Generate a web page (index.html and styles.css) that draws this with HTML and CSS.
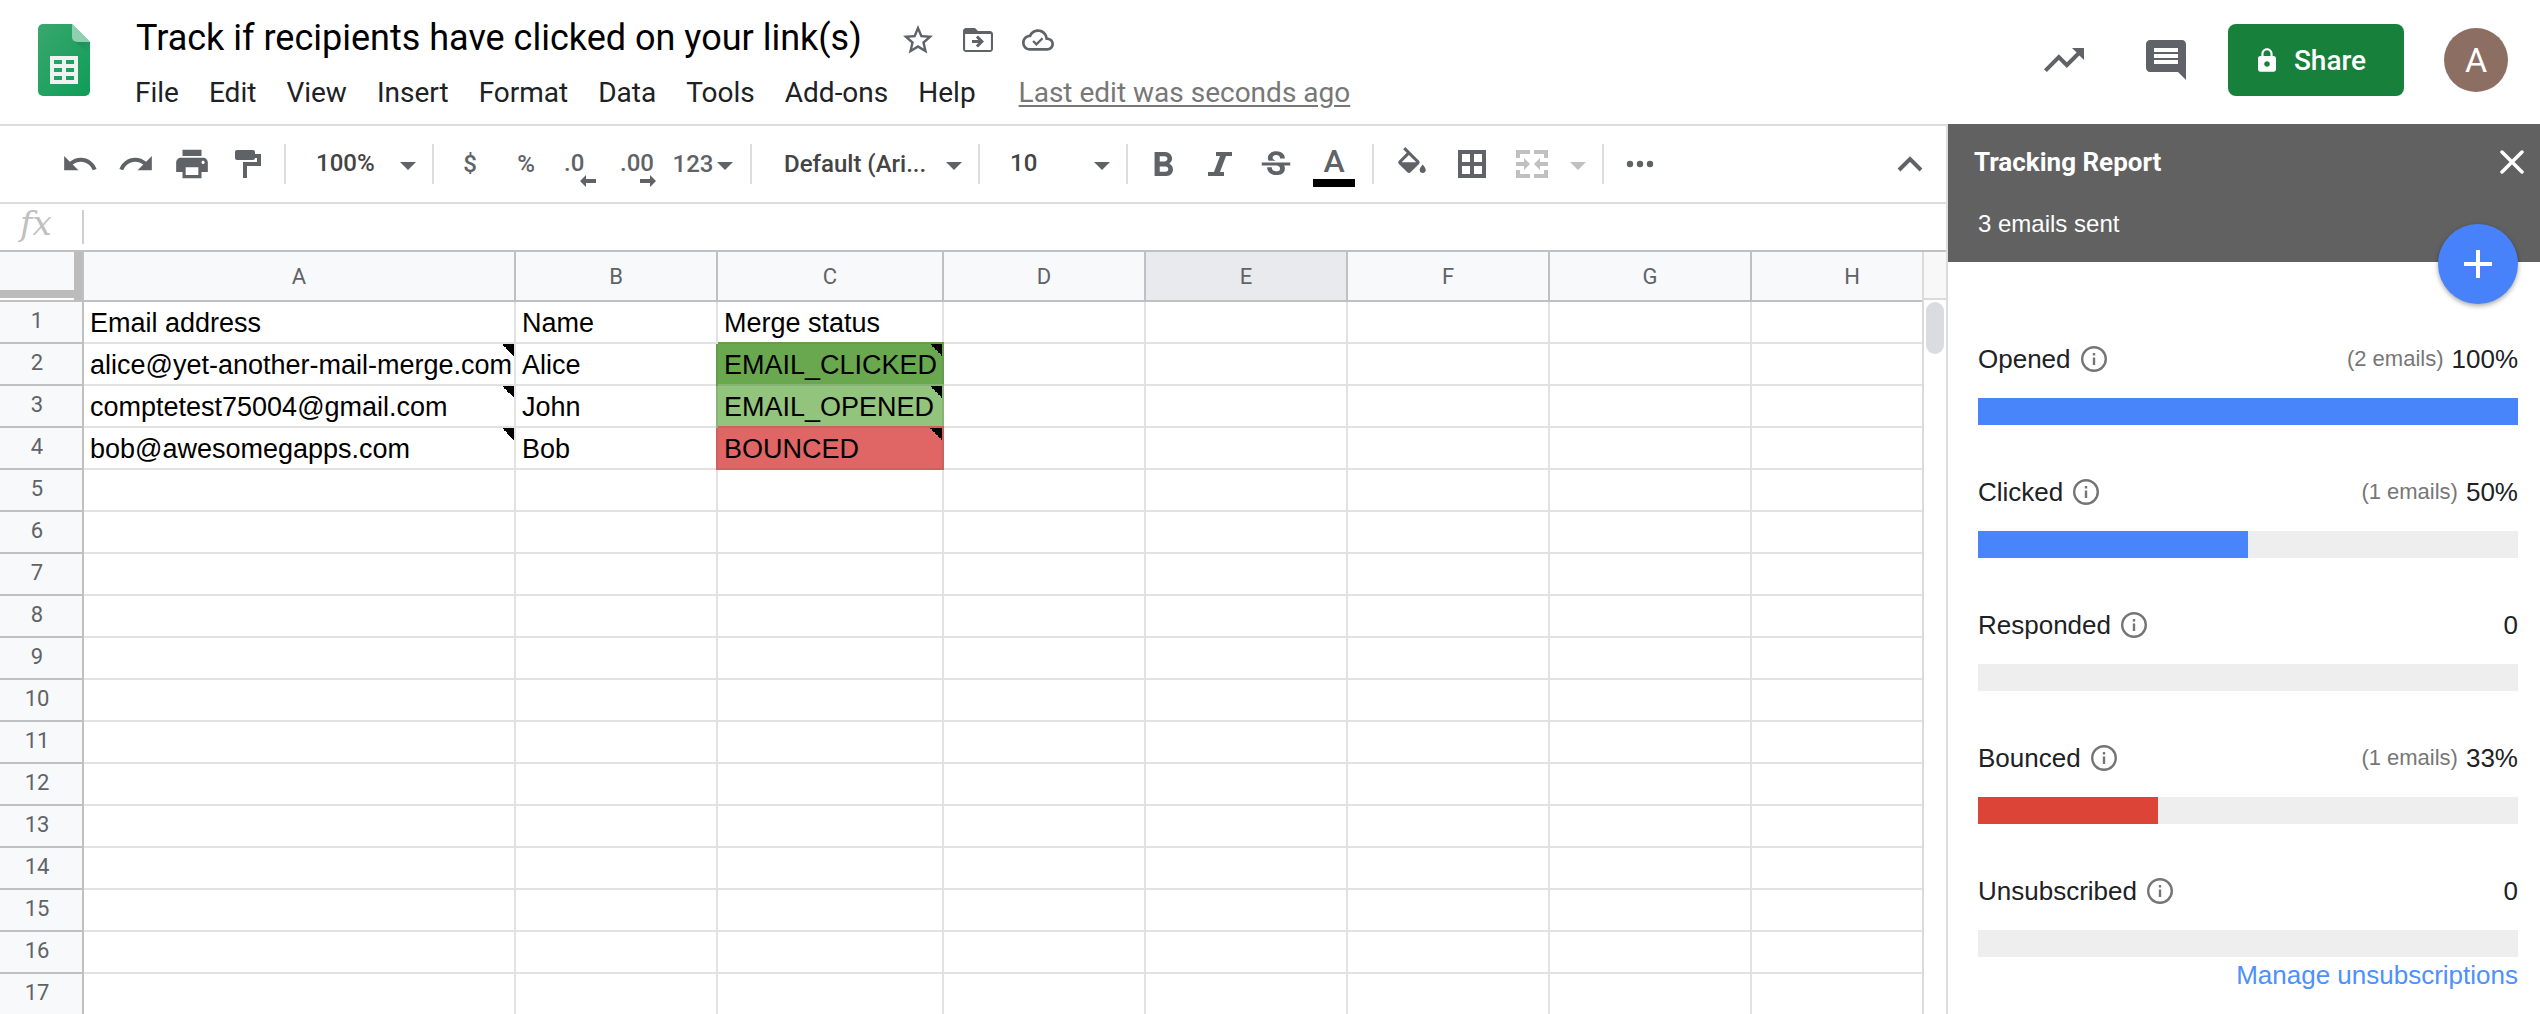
FILE: index.html
```html
<!DOCTYPE html>
<html lang="en">
<head>
<meta charset="utf-8">
<title>Track if recipients have clicked on your link(s)</title>
<link rel="stylesheet" href="styles.css">
</head>
<body>
<header class="topbar">
  <svg class="logo" viewBox="0 0 52 72" aria-hidden="true">
    <defs>
      <linearGradient id="leaf" x1="0" y1="0" x2="1" y2="1"><stop offset="0" stop-color="#3aa76d"/><stop offset="1" stop-color="#0f9d58"/></linearGradient>
      <linearGradient id="fold" x1="0" y1="0" x2="1" y2="1"><stop offset="0" stop-color="#1f8a5b"/><stop offset="1" stop-color="#1ea362"/></linearGradient>
    </defs>
    <path fill="url(#leaf)" d="M5 0h29l18 18v49a5 5 0 0 1-5 5H5a5 5 0 0 1-5-5V5a5 5 0 0 1 5-5z"/>
    <path fill="url(#fold)" d="M36 17l16 13V18z"/>
    <path fill="#8ed1b1" d="M34 0l18 18H39a5 5 0 0 1-5-5z"/>
    <path fill="#f1f1f1" fill-rule="evenodd" d="M12 32h28v28H12zM16 36v4h8v-4zM28 36v4h8v-4zM16 44v4h8v-4zM28 44v4h8v-4zM16 52v4h8v-4zM28 52v4h8v-4z"/>
  </svg>
  <div class="heading">
    <div class="title-row">
      <h1 class="doc-title">Track if recipients have clicked on your link(s)</h1>
      <button class="title-button" aria-label="Star"><svg class="icon-36" viewBox="0 0 24 24"><path d="M22 9.24l-7.19-.62L12 2 9.19 8.63 2 9.24l5.46 4.73L5.82 21 12 17.27 18.18 21l-1.63-7.03L22 9.24zM12 15.4l-3.76 2.27 1-4.28-3.32-2.88 4.38-.38L12 6.1l1.71 4.04 4.38.38-3.32 2.88 1 4.28L12 15.4z"/></svg></button>
      <button class="title-button" aria-label="Move"><svg class="icon-36" viewBox="0 0 24 24"><path d="M20 6h-8l-2-2H4c-1.1 0-2 .9-2 2v12c0 1.1.9 2 2 2h16c1.1 0 2-.9 2-2V8c0-1.1-.9-2-2-2zm.6 12.600H3.400V8h17.200v10.600z"/><path d="M12.160 12H8v2h4.160l-1.590 1.590L11.990 17 16 13.010 11.990 9l-1.410 1.410L12.160 12z"/></svg></button>
      <button class="title-button" aria-label="Document status"><svg class="icon-32" viewBox="0 0 24 24"><path d="M19.350 10.040C18.670 6.590 15.640 4 12 4 9.110 4 6.600 5.640 5.350 8.040 2.340 8.360 0 10.910 0 14c0 3.310 2.690 6 6 6h13c2.760 0 5-2.240 5-5 0-2.640-2.050-4.780-4.650-4.960zM19 18H6c-2.210 0-4-1.790-4-4 0-2.050 1.530-3.760 3.560-3.970l1.070-.110.5-.950C8.080 7.140 9.940 6 12 6c2.620 0 4.880 1.860 5.390 4.430l.3 1.500 1.530.110c1.560.1 2.780 1.410 2.780 2.960 0 1.650-1.350 3-3 3z"/><path fill="none" stroke="currentColor" stroke-width="1.700" d="M8.300 12.800l2.500 2.500 4.600-4.600"/></svg></button>
    </div>
    <nav class="menubar">
      <button class="menu">File</button>
      <button class="menu">Edit</button>
      <button class="menu">View</button>
      <button class="menu">Insert</button>
      <button class="menu">Format</button>
      <button class="menu">Data</button>
      <button class="menu">Tools</button>
      <button class="menu">Add-ons</button>
      <button class="menu">Help</button>
      <a class="last-edit" href="#history">Last edit was seconds ago</a>
    </nav>
  </div>
  <div class="account">
    <button class="plain" aria-label="Activity"><svg class="icon-48" viewBox="0 0 24 24"><path d="M16 6l2.290 2.290-4.880 4.880-4-4L2 16.590 3.410 18l6-6 4 4 6.300-6.290L22 12V6z"/></svg></button>
    <button class="plain" aria-label="Comments"><svg class="icon-48" viewBox="0 0 24 24"><path d="M21.990 4c0-1.100-.890-2-1.990-2H4c-1.100 0-2 .9-2 2v12c0 1.100.9 2 2 2h14l4 4-.010-18zM18 14H6v-2h12v2zm0-3H6V9h12v2zm0-3H6V6h12v2z"/></svg></button>
    <button class="share"><svg class="lock" viewBox="4 1 16 21"><path d="M18 8h-1V6c0-2.760-2.240-5-5-5S7 3.240 7 6v2H6c-1.100 0-2 .9-2 2v10c0 1.100.9 2 2 2h12c1.100 0 2-.9 2-2V10c0-1.100-.9-2-2-2zm-6 9.500c-1.400 0-2.500-1.100-2.500-2.500s1.100-2.500 2.500-2.500 2.500 1.100 2.500 2.500-1.100 2.500-2.500 2.500zm3.100-9.500H8.900V6c0-1.710 1.390-3.100 3.100-3.100 1.710 0 3.100 1.390 3.100 3.100v2z"/></svg>Share</button>
    <button class="avatar" aria-label="Account">A</button>
  </div>
</header>

<main class="workspace">
  <section class="sheet">
    <div class="toolbar">
      <button class="tool" aria-label="Undo"><svg class="icon-38" viewBox="0 0 24 24"><path d="M12.500 8c-2.650 0-5.050.990-6.900 2.600L2 7v9h9l-3.620-3.620c1.390-1.160 3.160-1.880 5.120-1.880 3.540 0 6.550 2.310 7.600 5.500l2.370-.780C21.080 11.030 17.150 8 12.500 8z"/></svg></button>
      <button class="tool" aria-label="Redo"><svg class="icon-38" viewBox="0 0 24 24"><path d="M18.400 10.600C16.550 8.990 14.150 8 11.500 8c-4.650 0-8.580 3.030-9.960 7.220L3.900 16c1.050-3.190 4.050-5.500 7.600-5.500 1.950 0 3.730.720 5.120 1.880L13 16h9V7l-3.600 3.600z"/></svg></button>
      <button class="tool" aria-label="Print"><svg class="icon-38" viewBox="0 0 24 24"><path d="M19 8H5c-1.660 0-3 1.340-3 3v6h4v4h12v-4h4v-6c0-1.660-1.340-3-3-3zm-3 11H8v-5h8v5zm3-7c-.550 0-1-.450-1-1s.450-1 1-1 1 .450 1 1-.450 1-1 1zm-1-9H6v4h12V3z"/></svg></button>
      <button class="tool" aria-label="Paint format"><svg class="icon-paint" viewBox="0 0 26 28"><path d="M2 0h16a2 2 0 0 1 2 2v2h6v12H12v12H8V12h14V8h-2a2 2 0 0 1-2 2H2a2 2 0 0 1-2-2V2a2 2 0 0 1 2-2z"/></svg></button>
      <span class="divider"></span>
      <label class="dropdown"><select aria-label="Zoom"><option>100%</option></select><svg class="caret" viewBox="0 0 16 8"><path d="M0 0h16l-8 8z"/></svg></label>
      <span class="divider"></span>
      <button class="tool">$</button>
      <button class="tool">%</button>
      <button class="tool decimals" aria-label="Decrease decimal places"><span>.0</span><svg class="step" viewBox="0 0 16 12"><path d="M0 6l6-6v4h10v4H6v4z"/></svg></button>
      <button class="tool decimals decimals-more" aria-label="Increase decimal places"><span>.00</span><svg class="step" viewBox="0 0 16 12"><path d="M16 6l-6-6v4H0v4h10v4z"/></svg></button>
      <button class="tool formats">123<svg class="caret" viewBox="0 0 16 8"><path d="M0 0h16l-8 8z"/></svg></button>
      <span class="divider"></span>
      <label class="dropdown dropdown-font"><select aria-label="Font"><option>Default (Ari...</option></select><svg class="caret" viewBox="0 0 16 8"><path d="M0 0h16l-8 8z"/></svg></label>
      <span class="divider"></span>
      <label class="dropdown"><select aria-label="Font size"><option>10</option></select><svg class="caret" viewBox="0 0 16 8"><path d="M0 0h16l-8 8z"/></svg></label>
      <span class="divider"></span>
      <button class="tool" aria-label="Bold"><svg class="icon-bold" viewBox="7 4 11 14"><path d="M15.600 10.790c.970-.670 1.650-1.770 1.650-2.790 0-2.260-1.750-4-4-4H7v14h7.040c2.090 0 3.710-1.700 3.710-3.790 0-1.520-.860-2.820-2.150-3.420zM10 6.500h3c.830 0 1.500.670 1.500 1.500s-.670 1.500-1.500 1.500h-3v-3zm3.500 9H10v-3h3.500c.830 0 1.500.670 1.500 1.500s-.670 1.500-1.500 1.500z"/></svg></button>
      <button class="tool" aria-label="Italic"><svg class="icon-italic" viewBox="0 0 24 24"><path d="M8 0h16v4h-6l-6 16h4v4H0v-4h6l6-16H8z"/></svg></button>
      <button class="tool" aria-label="Strikethrough"><svg class="icon-38" viewBox="0 -1 24 24"><path d="M6.850 7.080C6.850 4.370 9.450 3 12.240 3c1.640 0 3 .490 3.900 1.280.770.650 1.460 1.730 1.460 3.240h-3.010c0-.310-.050-.590-.150-.850-.290-.860-1.200-1.280-2.250-1.280-1.860 0-2.340 1.020-2.340 1.700 0 .480.250.880.740 1.210.380.250.770.480 1.410.700H7.390c-.210-.340-.540-.890-.540-1.920zM21 12v-2H3v2h9.620c1.150.450 1.960.750 1.960 1.970 0 1-.810 1.670-2.280 1.670-1.540 0-2.930-.540-2.930-2.510H6.400c0 .550.080 1.130.240 1.580.810 2.290 3.290 3.300 5.670 3.300 2.270 0 5.300-.890 5.300-4.050 0-.300-.010-1.160-.480-1.940H21V12z"/></svg></button>
      <button class="tool tool-wide text-color">A</button>
      <span class="divider"></span>
      <button class="tool tool-wide" aria-label="Fill color"><svg class="icon-fill" viewBox="3 0 18 17"><path d="M16.560 8.940L7.620 0 6.210 1.410l2.380 2.380-5.150 5.150c-.590.590-.590 1.540 0 2.120l5.500 5.500c.290.290.680.440 1.060.440s.770-.150 1.060-.440l5.500-5.500c.590-.580.590-1.530 0-2.120zM5.210 10L10 5.210 14.790 10H5.210zM19 11.500s-2 2.170-2 3.500c0 1.100.9 2 2 2s2-.9 2-2c0-1.330-2-3.500-2-3.500z"/></svg></button>
      <button class="tool tool-wide" aria-label="Borders"><svg class="icon-28" viewBox="0 0 28 28"><path fill-rule="evenodd" d="M0 0h28v28H0zM4 4v8h8V4zM16 4v8h8V4zM4 16v8h8v-8zM16 16v8h8v-8z"/></svg></button>
      <button class="tool tool-wide" aria-label="Merge cells" disabled><svg class="icon-merge" viewBox="0 0 32 28"><path d="M0 8V0h14v4H4v4zM18 0h14v8h-4V4H18zM0 20v8h14v-4H4v-4zM32 20v8H18v-4h10v-4zM0 12h8V8l6 6-6 6v-4H0zM32 12h-8V8l-6 6 6 6v-4h8z"/></svg></button>
      <button class="tool tool-narrow" aria-label="Merge options" disabled><svg class="caret" viewBox="0 0 16 8"><path d="M0 0h16l-8 8z"/></svg></button>
      <span class="divider"></span>
      <button class="tool" aria-label="More"><svg class="icon-28" viewBox="0 0 28 28"><circle cx="4" cy="14" r="3.200"/><circle cx="14" cy="14" r="3.200"/><circle cx="24" cy="14" r="3.200"/></svg></button>
      <button class="tool collapse" aria-label="Hide the menus"><svg class="icon-28" viewBox="0 0 28 28"><path fill="none" stroke="currentColor" stroke-width="4" d="M3 20L14 9l11 11"/></svg></button>
    </div>
    <div class="formula-bar">
      <label class="fx" for="formula">fx</label>
      <input class="formula" id="formula" type="text">
    </div>
    <div class="grid-area">
      <div class="grid-view">
        <table class="grid">
          <colgroup><col class="col-index"><col class="col-a"><col><col class="col-c"><col><col><col><col><col></colgroup>
          <thead>
            <tr><th class="corner"></th><th>A</th><th>B</th><th>C</th><th>D</th><th class="active">E</th><th>F</th><th>G</th><th>H</th></tr>
          </thead>
          <tbody>
            <tr><th>1</th><td>Email address</td><td>Name</td><td>Merge status</td><td></td><td></td><td></td><td></td><td></td></tr>
            <tr><th>2</th><td class="note">alice@yet-another-mail-merge.com</td><td>Alice</td><td class="note clicked">EMAIL_CLICKED</td><td></td><td></td><td></td><td></td><td></td></tr>
            <tr><th>3</th><td class="note">comptetest75004@gmail.com</td><td>John</td><td class="note opened">EMAIL_OPENED</td><td></td><td></td><td></td><td></td><td></td></tr>
            <tr><th>4</th><td class="note">bob@awesomegapps.com</td><td>Bob</td><td class="note bounced">BOUNCED</td><td></td><td></td><td></td><td></td><td></td></tr>
            <tr><th>5</th><td></td><td></td><td></td><td></td><td></td><td></td><td></td><td></td></tr>
            <tr><th>6</th><td></td><td></td><td></td><td></td><td></td><td></td><td></td><td></td></tr>
            <tr><th>7</th><td></td><td></td><td></td><td></td><td></td><td></td><td></td><td></td></tr>
            <tr><th>8</th><td></td><td></td><td></td><td></td><td></td><td></td><td></td><td></td></tr>
            <tr><th>9</th><td></td><td></td><td></td><td></td><td></td><td></td><td></td><td></td></tr>
            <tr><th>10</th><td></td><td></td><td></td><td></td><td></td><td></td><td></td><td></td></tr>
            <tr><th>11</th><td></td><td></td><td></td><td></td><td></td><td></td><td></td><td></td></tr>
            <tr><th>12</th><td></td><td></td><td></td><td></td><td></td><td></td><td></td><td></td></tr>
            <tr><th>13</th><td></td><td></td><td></td><td></td><td></td><td></td><td></td><td></td></tr>
            <tr><th>14</th><td></td><td></td><td></td><td></td><td></td><td></td><td></td><td></td></tr>
            <tr><th>15</th><td></td><td></td><td></td><td></td><td></td><td></td><td></td><td></td></tr>
            <tr><th>16</th><td></td><td></td><td></td><td></td><td></td><td></td><td></td><td></td></tr>
            <tr><th>17</th><td></td><td></td><td></td><td></td><td></td><td></td><td></td><td></td></tr>
          </tbody>
        </table>
      </div>
      <div class="scrollbar"><div class="scroll-cap"></div><div class="scroll-thumb"></div></div>
    </div>
  </section>

  <aside class="panel">
    <div class="panel-head">
      <div class="panel-title-row">
        <h2 class="panel-title">Tracking Report</h2>
        <button class="close" aria-label="Close"><svg class="icon-24" viewBox="0 0 24 24"><path fill="none" stroke="currentColor" stroke-width="3.500" stroke-linecap="round" d="M2 2l20 20M22 2L2 22"/></svg></button>
      </div>
      <p class="sent">3 emails sent</p>
      <button class="fab" aria-label="New merge"><svg class="icon-28" viewBox="0 0 28 28"><path d="M12 0h4v12h12v4H16v12h-4V16H0v-4h12z"/></svg></button>
    </div>
    <div class="metrics">
      <div class="metric">
        <div class="metric-row"><span>Opened</span><svg class="info" viewBox="0 0 26 26"><circle cx="13" cy="13" r="11.800"/><path d="M13 11.500V19M13 7v2.500"/></svg><span class="count">(2 emails)</span><span class="value">100%</span></div>
        <div class="track"><div class="fill" style="width:100%"></div></div>
      </div>
      <div class="metric">
        <div class="metric-row"><span>Clicked</span><svg class="info" viewBox="0 0 26 26"><circle cx="13" cy="13" r="11.800"/><path d="M13 11.500V19M13 7v2.500"/></svg><span class="count">(1 emails)</span><span class="value">50%</span></div>
        <div class="track"><div class="fill" style="width:50%"></div></div>
      </div>
      <div class="metric">
        <div class="metric-row"><span>Responded</span><svg class="info" viewBox="0 0 26 26"><circle cx="13" cy="13" r="11.800"/><path d="M13 11.500V19M13 7v2.500"/></svg><span class="count"></span><span class="value">0</span></div>
        <div class="track"></div>
      </div>
      <div class="metric">
        <div class="metric-row"><span>Bounced</span><svg class="info" viewBox="0 0 26 26"><circle cx="13" cy="13" r="11.800"/><path d="M13 11.500V19M13 7v2.500"/></svg><span class="count">(1 emails)</span><span class="value">33%</span></div>
        <div class="track"><div class="fill fill-bad" style="width:33.300%"></div></div>
      </div>
      <div class="metric">
        <div class="metric-row"><span>Unsubscribed</span><svg class="info" viewBox="0 0 26 26"><circle cx="13" cy="13" r="11.800"/><path d="M13 11.500V19M13 7v2.500"/></svg><span class="count"></span><span class="value">0</span></div>
        <div class="track"></div>
      </div>
      <a class="manage" href="#unsubscriptions">Manage unsubscriptions</a>
    </div>
  </aside>
</main>
</body>
</html>
```
FILE: styles.css
```css
* { box-sizing: border-box; }

body {
  margin: 0;
  height: 100vh;
  display: flex;
  flex-direction: column;
  overflow: hidden;
  background: #fff;
  color: #202124;
  font-family: Roboto, "Liberation Sans", sans-serif;
}

button, select, input { font: inherit; color: inherit; }

button {
  border: 0;
  padding: 0;
  background: none;
  display: flex;
  align-items: center;
  justify-content: center;
}

svg { display: block; flex: none; fill: currentColor; }

h1, h2, p { margin: 0; }

.icon-24 { width: 24px; height: 24px; }
.icon-28 { width: 28px; height: 28px; }
.icon-32 { width: 32px; height: 32px; }
.icon-36 { width: 36px; height: 36px; }
.icon-38 { width: 38px; height: 38px; }
.icon-48 { width: 48px; height: 48px; }
.icon-paint { width: 26px; height: 28px; }
.icon-bold { width: 20px; height: 24px; }
.icon-italic { width: 24px; height: 24px; }
.icon-fill { width: 28px; height: 26px; margin-bottom: 8px; }
.icon-merge { width: 32px; height: 28px; }

/* Header */
.topbar {
  flex: none;
  display: flex;
  height: 124px;
  padding: 0 32px 0 38px;
}

.logo { width: 52px; height: 72px; margin-top: 24px; }

.heading { flex: 1; padding: 14px 0 0 30px; }

.title-row { display: flex; align-items: center; height: 52px; }

.doc-title {
  margin: 0 26px 0 16px;
  color: #000;
  font: 400 36px/48px Roboto, sans-serif;
  padding-bottom: 4px;
  white-space: nowrap;
}

.title-button { width: 60px; height: 52px; color: #5f6368; }

.menubar {
  display: flex;
  align-items: center;
  height: 54px;
  font-size: 28px;
  line-height: 40px;
}

.menu { padding: 0 15px; white-space: nowrap; }

.last-edit {
  margin-left: 28px;
  color: #777;
  text-underline-offset: 3px;
  white-space: nowrap;
}

.account {
  display: flex;
  align-items: center;
  height: 120px;
  color: #5f6368;
}

.plain { margin-right: 54px; }
.plain + .plain { margin-right: 38px; }

.share {
  width: 176px;
  height: 72px;
  gap: 18px;
  padding-right: 8px;
  border-radius: 8px;
  background: #17813c;
  color: #fff;
  font-size: 28px;
  font-weight: 500;
}

.lock { width: 18px; height: 24px; }

.avatar {
  width: 64px;
  height: 64px;
  margin-left: 40px;
  border-radius: 50%;
  background: #8d6e63;
  color: #fff;
  font-size: 34px;
}

/* Workspace */
.workspace { flex: 1; display: flex; min-height: 0; }

.sheet {
  flex: 1;
  min-width: 0;
  display: flex;
  flex-direction: column;
  border-top: 2px solid #dadce0;
  border-right: 2px solid #dadce0;
}

.toolbar {
  flex: none;
  display: flex;
  align-items: center;
  height: 78px;
  padding: 0 8px 0 52px;
  border-bottom: 2px solid #dadce0;
  color: #5f6368;
  font-size: 24px;
  font-weight: 500;
}

.tool { flex: none; width: 56px; height: 52px; color: #5f6368; }
.tool-wide { width: 60px; }
.tool-narrow { width: 32px; }
.tool:disabled { color: #c0c0c0; }
.collapse { margin-left: auto; }

.divider {
  flex: none;
  width: 2px;
  height: 40px;
  margin: 0 8px;
  background: #dadce0;
}

.dropdown { flex: none; display: grid; align-items: center; width: 130px; }
.dropdown-font { width: 210px; }
.dropdown > * { grid-area: 1 / 1; }
.dropdown .caret { justify-self: end; margin: 4px 8px 0 0; pointer-events: none; }

.dropdown select {
  appearance: none;
  width: 100%;
  height: 52px;
  padding: 0 0 2px 22px;
  border: 0;
  background: none;
  color: #444;
}

.dropdown-font select { padding: 0 0 0 24px; }

.caret { width: 16px; height: 8px; margin-top: 4px; }

.decimals { flex-direction: column; align-items: flex-start; padding: 10px 14px 0 10px; }
.decimals-more { padding-right: 10px; }
.decimals span { line-height: 24px; }
.step { align-self: flex-end; width: 16px; height: 12px; }

.formats { width: 76px; gap: 4px; padding-right: 2px; }

.text-color { flex-direction: column; padding-top: 4px; font-size: 32px; line-height: 32px; }
.text-color::after { content: ""; width: 42px; height: 8px; margin-top: 2px; background: #000; }

.formula-bar { flex: none; display: flex; height: 48px; padding: 6px 0 6px; border-bottom: 2px solid #c0c0c0; }

.fx {
  flex: none;
  width: 84px;
  padding-left: 20px;
  border-right: 2px solid #d0d0d0;
  color: #c0c0c0;
  font: italic 34px/26px "DejaVu Serif", "Liberation Serif", serif;
}

.formula {
  flex: 1;
  min-width: 0;
  border: 0;
  outline: 0;
  padding: 0 8px;
  background: none;
  font-size: 26px;
}

/* Spreadsheet grid */
.grid-area { flex: 1; display: flex; min-height: 0; }

.grid-view { flex: 1; min-width: 0; overflow: hidden; }

.grid {
  width: 1954px;
  table-layout: fixed;
  border-spacing: 0;
}

.grid col { width: 202px; }
.grid .col-index { width: 84px; }
.grid .col-a { width: 432px; }
.grid .col-c { width: 226px; }

.grid th, .grid td {
  height: 42px;
  padding: 0;
  border: solid #e2e2e2;
  border-width: 0 2px 2px 0;
}

.grid th {
  background: #f8f9fb;
  border-color: #c0c0c0;
  color: #5f6368;
  font-size: 22px;
  font-weight: 400;
  line-height: 38px;
}

.grid tbody th { padding: 0 8px 2px 0; }
.grid thead th { height: 50px; padding-top: 2px; }
.grid thead .active { background: #e8eaed; }

.grid .corner { box-shadow: inset -8px 0 0 #bcbcbc, inset 0 -2px 0 #fff, inset 0 -10px 0 #bcbcbc; }

.grid td {
  padding: 2px 0 0 6px;
  color: #000;
  font: 27px/36px "Liberation Sans", Arial, sans-serif;
  white-space: nowrap;
}

.grid .note {
  background: linear-gradient(to top right, transparent 50%, #000 50%) top right / 12px 12px no-repeat;
}

.grid .clicked { background-color: #6aa84f; border-color: #659d4e; box-shadow: -2px 0 #659d4e, 0 -2px #659d4e; }
.grid .opened { background-color: #93c47d; border-color: #88b377; box-shadow: -2px 0 #88b377, 0 -2px #88b377; }
.grid .bounced { background-color: #e06666; border-color: #cb6161; box-shadow: -2px 0 #cb6161, 0 -2px #cb6161; }

.scrollbar { flex: none; width: 24px; border-left: 2px solid #dadada; }
.scroll-cap { height: 48px; background: #f8f8f8; border-bottom: 2px solid #dadada; }
.scroll-thumb { height: 52px; margin: 2px; border-radius: 9px; background: #dadce0; }

/* Tracking report */
.panel {
  flex: none;
  width: 592px;
  font-family: "Liberation Sans", Arial, sans-serif;
  font-size: 26px;
  line-height: 32px;
}

.panel-head {
  position: relative;
  height: 138px;
  padding: 20px 16px 0 26px;
  background: #616161;
  color: #fff;
}

.panel-title-row { display: flex; align-items: center; justify-content: space-between; height: 36px; }
.panel-title { font: 700 26px/32px Roboto, sans-serif; }
.sent { padding: 28px 0 0 4px; font-size: 24px; }

.fab {
  position: absolute;
  right: 22px;
  bottom: -42px;
  width: 80px;
  height: 80px;
  border-radius: 50%;
  background: #4882fb;
  color: #fff;
  box-shadow: 0 2px 5px rgba(0, 0, 0, .35);
}

.metrics {
  display: flex;
  flex-direction: column;
  gap: 46px;
  padding: 76px 22px 0 30px;
}

.metric { display: flex; flex-direction: column; gap: 18px; }
.metric-row { display: flex; align-items: center; height: 42px; }

.info { width: 26px; height: 26px; margin-left: 10px; fill: none; stroke: #757575; stroke-width: 2.4; }
.count { margin-left: auto; color: #777; font-size: 22px; }
.value { margin-left: 8px; }

.track { height: 27px; background: #eee; }
.fill { height: 100%; background: #4885fb; }
.fill-bad { background: #db4437; }

.manage { align-self: flex-end; margin-top: -44px; color: #4d90fe; text-decoration: none; }
```
